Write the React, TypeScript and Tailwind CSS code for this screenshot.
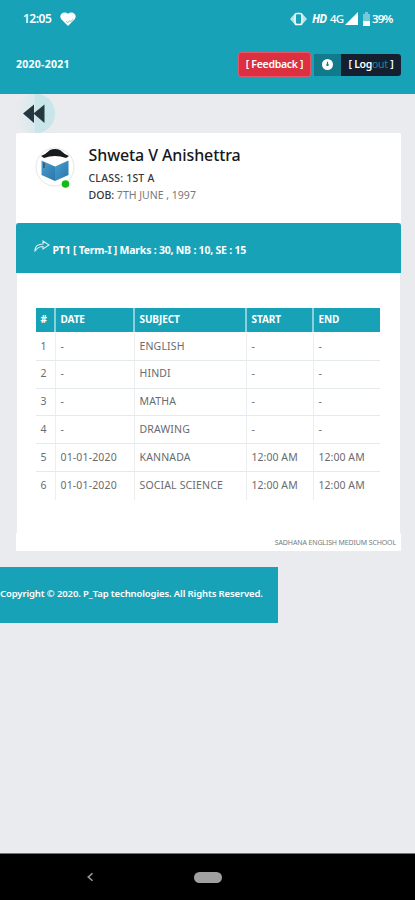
const rows = [
  { date: "-", subject: "ENGLISH", start: "-", end: "-" },
  { date: "-", subject: "HINDI", start: "-", end: "-" },
  { date: "-", subject: "MATHA", start: "-", end: "-" },
  { date: "-", subject: "DRAWING", start: "-", end: "-" },
  { date: "01-01-2020", subject: "KANNADA", start: "12:00 AM", end: "12:00 AM" },
  { date: "01-01-2020", subject: "SOCIAL SCIENCE", start: "12:00 AM", end: "12:00 AM" },
];

const columns = "grid grid-cols-[20px_79px_112px_67px_66px]";

function StatusBar() {
  return (
    <div className="flex h-[37px] items-center pl-[23px] pr-[22px] text-[12px] font-semibold text-white">
      <span className="w-[37px] tracking-[-0.5px]">12:05</span>
      <svg className="h-[14px] w-[16px]" viewBox="0 0 16 14">
        <path d="M8 14 1.3 7.2C-2 3.3 3.5-2.2 8 1.8c4.5-4 10 1.5 6.7 5.4Z" fill="white" />
        <path d="m6 9.5 1.5 1 2-1.500 1.500 .3 2.500-2.300" fill="none" stroke="#18a2b8" strokeWidth=".6" />
      </svg>
      <svg className="ml-auto h-[14px] w-[17px]" viewBox="0 0 17 14">
        <path d="M4 2.5 0 7l4 4.5zM13 2.5 17 7l-4 4.5z" fill="#b9e4ea" />
        <rect x="5" y="1.5" width="7" height="11" rx="2" fill="#18a2b8" stroke="white" strokeWidth="1.7" />
      </svg>
      <span className="ml-[5px] w-[16px] text-[11.5px] font-bold italic tracking-[-0.9px]">HD</span>
      <span className="ml-[2px] w-[14px] text-[11.5px] font-medium tracking-[-0.8px]">4G</span>
      <svg className="ml-px h-[13px] w-[13px]" viewBox="0 0 13 13">
        <path d="M13 0v13H0z" fill="white" />
      </svg>
      <svg className="ml-[5px] h-[14px] w-[7px]" viewBox="0 0 7 14">
        <path d="M2 0h3v2h2v12H0V2h2z" fill="#75c8d5" />
        <path d="M0 9h7v5H0z" fill="white" />
      </svg>
      <span className="ml-[2px] w-[21px] text-[11.5px] tracking-[-0.9px]">39%</span>
    </div>
  );
}

function Header() {
  return (
    <header className="h-[94px] bg-[#18a2b8]">
      <StatusBar />
      <div className="flex h-[55px] items-center pl-4 pr-[14px] font-bold text-white">
        <span className="text-[10.5px] tracking-[0.25px]">2020-2021</span>
        <button className="ml-auto h-[25px] w-[73px] rounded-[3px] border border-[#e4576a] bg-[#dc3041] text-[10.5px] font-semibold tracking-[-0.3px]">
          [ Feedback ]
        </button>
        <button className="ml-[3px] flex h-[22px] w-[87px] overflow-hidden rounded-[3px] bg-[#14202f] text-[10.5px] font-semibold tracking-[-0.3px]">
          <span className="flex h-full w-[27px] items-center justify-center bg-[#117a8b]">
            <svg className="h-[11px] w-[11px]" viewBox="0 0 11 11">
              <circle cx="5.5" cy="5.5" r="5.5" fill="white" />
              <path d="M5.5 2.800v3" stroke="#117a8b" strokeWidth="1.2" />
              <circle cx="5.5" cy="5.9" r="1.2" fill="#117a8b" />
            </svg>
          </span>
          <span className="flex h-full flex-1 items-center justify-center whitespace-pre">
            [ Log<span className="font-normal text-[#178c9d]">out</span> ]
          </span>
        </button>
      </div>
    </header>
  );
}

function BackButton() {
  return (
    <svg className="block h-[39px] w-[60px]" viewBox="0 0 60 39">
      <defs>
        <linearGradient id="halo" x1="0" x2="1">
          <stop offset=".1" stopColor="#e9ebee" />
          <stop offset="1" stopColor="#d8eaed" />
        </linearGradient>
      </defs>
      <path d="M35 -.5a20 20 0 0 0 0 40z" fill="url(#halo)" />
      <path d="M35 -.5a20 20 0 0 1 0 40z" fill="#c8e6e9" />
      <path d="M34 10.500v18.500L23 19.500zM44.500 10.500v18.500L33.500 19.500z" fill="#26383f" />
    </svg>
  );
}

function Avatar() {
  return (
    <svg className="h-[42px] w-[40px] shrink-0" viewBox="0 0 40 42">
      <defs>
        <linearGradient id="page" x1="0" x2="1" y1="0" y2="1">
          <stop stopColor="#4a9fd0" />
          <stop offset="1" stopColor="#2b76aa" />
        </linearGradient>
      </defs>
      <circle cx="20" cy="20" r="19" fill="white" stroke="#e4e6e8" strokeWidth="1" />
      <path d="M6 9q5-2 9-6 5-2 10 0 4 4 9 6l-3 2Q20 7 9 11z" fill="#171b1e" />
      <path d="m6.500 13.500 13.500 6v14.500L6.500 28z" fill="url(#page)" />
      <path d="m33.500 13.500-13.500 6v14.500l13.500-6z" fill="url(#page)" />
      <path d="m8 15 2 1v5H8z" fill="#535b5a" />
      <circle cx="30.500" cy="37" r="3.800" fill="#12bd13" />
    </svg>
  );
}

function Profile() {
  return (
    <section className="flex h-[90px] rounded-t-[2px] bg-white pl-[19px] pt-[14px]">
      <Avatar />
      <div className="ml-[14px] text-[10.5px] leading-[17px] text-[#76797c]">
        <h1 className="mt-[-3px] text-[16px] font-medium leading-[22px] tracking-[-0.1px] text-[#161819]">
          Shweta V Anishettra
        </h1>
        <p className="mt-[4px] font-medium tracking-[0.2px] text-[#35383b]">CLASS: 1ST A</p>
        <p className="tracking-[0px]">
          <span className="font-medium text-[#35383b]">DOB:</span> 7TH JUNE , 1997
        </p>
      </div>
    </section>
  );
}

function Timetable() {
  return (
    <div className="mx-px h-[260px] bg-white pl-[19px] pt-[35px]">
      <div className={`${columns} h-[24px] w-[344px] items-center bg-[#18a2b8] text-[10px] font-bold text-white tracking-[-0.1px]`}>
        {["#", "DATE", "SUBJECT", "START", "END"].map((name) => (
          <div key={name} className="flex h-full items-center border-r-2 border-[#8bd0dc] pb-px pl-[5px] last:border-0">
            {name}
          </div>
        ))}
      </div>
      <div className="w-[344px] pt-px text-[10.5px] tracking-[0.15px] text-[#696c6f]">
        {rows.map((row, index) => (
          <div
            key={row.subject}
            className={`${columns} h-[27.75px] border-b border-[#e5eaec] last:border-b-0 *:flex *:items-center *:border-r *:border-[#eceff0] *:pl-[5px] *:last:border-r-0`}
          >
            <div>{index + 1}</div>
            <div>{row.date}</div>
            <div>{row.subject}</div>
            <div className="tracking-[0.05px]">{row.start}</div>
            <div className="tracking-[0.05px]">{row.end}</div>
          </div>
        ))}
      </div>
    </div>
  );
}

export default function App() {
  return (
    <div className="flex h-[900px] w-[415px] flex-col overflow-hidden bg-[#e9ebee] font-['Noto_Sans',sans-serif] whitespace-nowrap">
      <Header />
      <BackButton />
      <main className="ml-[15.5px] w-[385.5px]">
        <Profile />
        <h2 className="flex h-[50px] items-center rounded-t-[3px] bg-[#18a2b8] pl-[18px] pt-[5px] text-[10.5px] font-bold tracking-[-0.22px] text-white">
          <svg className="mr-[3px] mt-[-10px] h-[12px] w-[16px]" viewBox="0 0 16 12" fill="none" stroke="#d2eff3" strokeWidth="1.1">
            <path d="M1 11q0-7 8-7V1l6 4-6 4V6.500Q4 6.500 1 11Z" />
          </svg>
          PT1 [ Term-I ] Marks : 30, NB : 10, SE : 15
        </h2>
        <Timetable />
        <div className="flex h-[18px] items-center justify-end bg-white pr-[5px] pt-[3px] text-[7px] tracking-[-0.13px] text-[#777a7d]">
          SADHANA ENGLISH MEDIUM SCHOOL
        </div>
      </main>
      <footer className="mt-4 flex h-[56px] w-[278px] items-center bg-[#18a2b8] pb-[2px] text-[9.5px] font-semibold tracking-[-0.12px] text-white">
        Copyright © 2020. P_Tap technologies. All Rights Reserved.
      </footer>
      <nav className="mt-auto flex h-[47px] items-center border-t border-[#777] bg-black">
        <svg className="ml-[86px] h-[10px] w-[8px]" viewBox="0 0 8 12" fill="none" stroke="#999" strokeWidth="2">
          <path d="M7 1.500 2 6l5 4.500" />
        </svg>
        <div className="ml-[100px] h-[11px] w-[28px] rounded-full bg-[#a0a0a0]" />
      </nav>
    </div>
  );
}
